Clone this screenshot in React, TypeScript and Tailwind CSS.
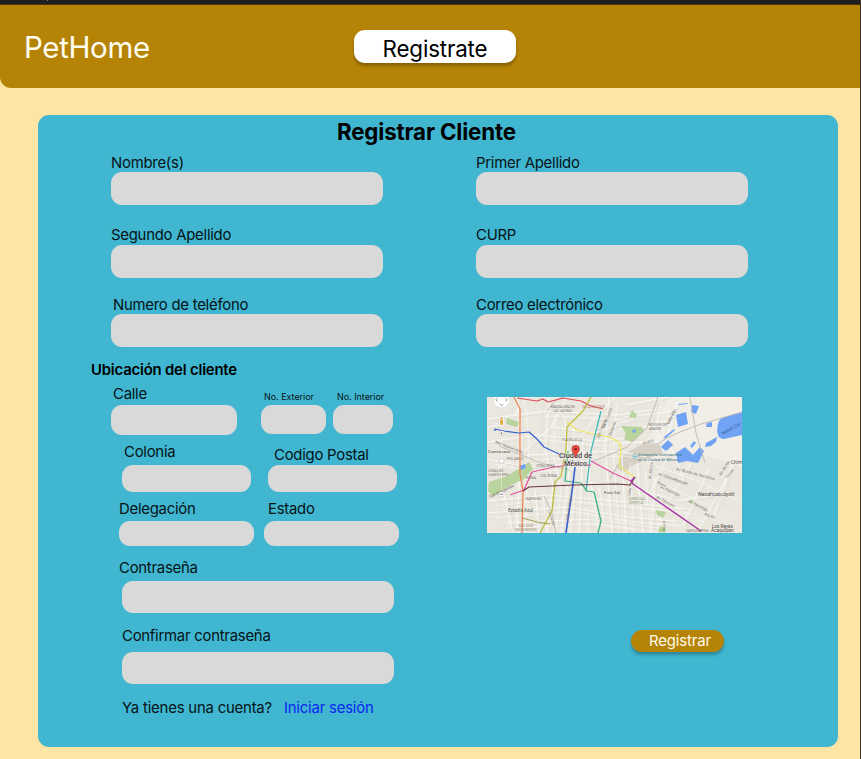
type FieldProps = {
  label: string;
  className?: string;
  labelClass?: string;
  boxClass: string;
};

function Field({ label, className = "", labelClass = "", boxClass }: FieldProps) {
  return (
    <label className={`flex flex-col items-start ${className}`}>
      <span className={`whitespace-nowrap ${labelClass}`}>{label}</span>
      <input className={`bg-[#d9d9d9] outline-none ${boxClass}`} />
    </label>
  );
}

const WIDE = "h-[33px] w-[272px] rounded-[11px]";

const STREETS = [
  "M0 22L60 14L130 18L170 12", "M0 45L50 38L110 44L150 40", "M0 62L40 70L95 66", "M40 58L130 54L160 60",
  "M30 0L34 40L30 136", "M62 0L58 50L66 90L60 136", "M78 20L82 80L74 136", "M96 40L92 136", "M122 0L118 50L125 136",
  "M135 60L139 136", "M150 66L156 136", "M0 104L60 98L130 104L200 112", "M0 116L80 110L140 120L190 124",
  "M20 126L100 122L180 132", "M16 92L26 136", "M48 92L52 136", "M104 85L112 136", "M168 80L164 136",
  "M176 0L168 30L180 52", "M190 4L180 40L196 80", "M138 8L180 0", "M136 20L186 14", "M132 32L180 28",
  "M126 46L184 44", "M160 66L210 84L255 106", "M166 82L220 108L250 136", "M158 95L216 126", "M180 60L164 94",
  "M204 66L178 110", "M222 72L196 128", "M241 78L212 132", "M248 60L226 120", "M150 92L190 104L238 96",
  "M0 78L30 60L64 30L80 0", "M64 30L108 36L150 20", "M88 48L110 18L128 0", "M0 30L22 26L40 0",
];

function Label({ x, y, s = 4, r = 0, c = "#77736c", children }: { x: number; y: number; s?: number; r?: number; c?: string; children: string }) {
  return (
    <text x={x} y={y} fontSize={s} fill={c} transform={`rotate(${r} ${x} ${y})`}>
      {children}
    </text>
  );
}

function CityMap() {
  return (
    <svg viewBox="0 0 255 136" preserveAspectRatio="none" className="mt-[50px] ml-[11px] h-[136px] w-[255px] tracking-normal" fontFamily="Roboto, sans-serif">
      <rect width="255" height="136" fill="#eae7df" />
      <path d="M180 0H255V70L238 64L196 52L172 62L150 60L164 36Z" fill="#f1eee8" />
      <path d="M130 70L136 58L150 50L160 45L173 48L176 56L160 62L146 68L136 76Z" fill="#d6cfc5" />
      <g fill="none" stroke="#faf9f6" strokeWidth="1">
        {STREETS.map((d) => <path key={d} d={d} />)}
        {STREETS.slice(0, 18).map((d) => <path key={d} d={d} transform="translate(8 5)" strokeWidth=".7" />)}
      </g>
      <g fill="none" stroke="#dcd8cf" strokeWidth=".4">
        {STREETS.map((d) => <path key={d} d={d} transform="translate(3 2)" />)}
        {STREETS.slice(0, 26).map((d) => <path key={d} d={d} transform="translate(-5 7)" />)}
      </g>
      {/* parks */}
      <g fill="#b8d39b">
        <path d="M2 85L20 79L36 69L42 65L46 72L37 82L22 89L6 99L1 94Z" />
        <path d="M20 21L32 25L30 30L19 27Z" />
        <path d="M134 29L155 30L157 34L145 45L137 42L139 36Z" />
        <path d="M145 13L150 18L149 21L142 20Z" />
        <path d="M169 113L179 115L176 121L170 118Z" />
        <path d="M173 129L179 131L178 136L171 135Z" />
        <path d="M203 103L207 104L204 107Z" />
      </g>
      {/* lakes */}
      <g fill="#71a3f5">
        <path d="M189 18L199 15L201 27L191 30Z" />
        <path d="M205 8L212 9L209 17L204 15Z" />
        <path d="M220 26L225 25L225 30L219 30Z" />
        <path d="M219 46L230 40L229 45L224 49L218 50Z" />
        <path d="M231 27Q232 21 238 20L255 15V38L237 42Q228 42 231 27Z" />
        <path d="M189 56L198 50L206 58L213 50L217 54L211 66L200 64L191 66Z" />
        <path d="M174 50L181 43L186 48L179 54Z" />
        <path d="M191 7L201 6L200 7L192 8Z" />
        <path d="M177 40L187 32L188 33L178 42Z" />
        <path d="M203 49L207 44L209 46L205 51Z" />
        <path d="M146 33L149 32L148 36L145 35Z" />
        <path d="M32 69L38 67L39 71L34 73Z" />
      </g>
      {/* main roads */}
      <g fill="none" stroke="#bdb9b0" strokeWidth=".9">
        <path d="M170 47L188 37L214 27L255 15" />
        <path d="M203 0L209 36L218 66" />
        <path d="M104 65L124 57L140 50L160 31L171 0" />
        <path d="M60 14L68 4L76 0" />
        <path d="M12 49L54 66L82 73" />
        <path d="M57 99L65 116L69 136" />
        <path d="M123 82L134 62" />
      </g>
      {/* metro lines */}
      <g fill="none" strokeWidth="1.25" strokeLinejoin="round">
        <path d="M27 0L33 12L33 77L36 94L35 136" stroke="#ee8350" />
        <path d="M30 1L50 4L56 2L61 5L76 1L94 4L104 9L116 12" stroke="#df4d59" />
        <path d="M104 0L96 14L80 30L79 52L74 79L68 85L65 114L53 136" stroke="#bcbd38" />
        <path d="M80 25L90 33L107 37L122 40L132 45L134 52L132 69L147 80" stroke="#efe65f" />
        <path d="M114 14L104 54L99 94" stroke="#3dbbb6" />
        <path d="M81 54L78 84L94 86L100 94L107 95L114 124L111 136" stroke="#3baf80" />
        <path d="M8 34V32L17 34L32 36L42 35L50 42L57 50L74 58" stroke="#355fd0" />
        <path d="M88 70L86 87L79 136" stroke="#355fd0" strokeWidth="1.6" />
        <path d="M23 98L37 93L45 75L67 70L83 68H104" stroke="#e2539d" />
        <path d="M104 64L126 76L144 84" stroke="#e2539d" />
        <path d="M36 94L42 90L87 88L130 87L143 88L148 80" stroke="#67343d" />
        <path d="M148 80L144 84L146 87L214 134" stroke="#a638a5" strokeWidth="1.5" />
        <path d="M35 121L50 125L63 127" stroke="#9a9343" strokeWidth=".9" />
      </g>
      <Label x={64} y={11} s={3.2}>MAGDALENA DE</Label>
      <Label x={66} y={15} s={3.2}>LAS SALINAS</Label>
      <Label x={95} y={11} s={3.1} c="#b47a68">VILLA GUSTAVO</Label>
      <Label x={75} y={44} s={3.4}>TLATELOLCO</Label>
      <Label x={20} y={63} s={3.6}>POLANCO</Label>
      <Label x={1} y={56} s={4.2} c="#4e4c48">Cuernavaca</Label>
      <Label x={8} y={46} r={21} s={3.8}>Blvd Manuel Avila</Label>
      <Label x={1} y={75} s={3.2}>LOMAS DE</Label>
      <Label x={1} y={79} s={3.2}>CHAPULTEPEC</Label>
      <Label x={39} y={82} s={3.5}>ROMA</Label>
      <Label x={53} y={80} s={3.5}>COL ROMA</Label>
      <Label x={49} y={70} s={3.5}>ZONA ROSA</Label>
      <Label x={3} y={101} r={-25} s={4} c="#55524d">Constituyentes</Label>
      <Label x={39} y={103} s={3.5}>NAPOLES</Label>
      <Label x={21} y={115} s={4.5} c="#4e4c48">Estadio Azul</Label>
      <Label x={31} y={130} s={3.3} c="#a9917f">SAN JOSE</Label>
      <Label x={28} y={134} s={3.3} c="#a9917f">INSURGENTES</Label>
      <Label x={81} y={124} r={-80} s={3.8}>Calz. de Tlalpan</Label>
      <Label x={61} y={114} r={72} s={3}>Universidad</Label>
      <Label x={112} y={41} r={-66} s={4}>Eje 1 Norte</Label>
      <Label x={118} y={31} r={-70} s={4}>Av. Eduardo</Label>
      <Label x={124} y={39} r={-70} s={4}>Oceania</Label>
      <Label x={117} y={97} s={4.4} c="#4e4c48">Foro Sol</Label>
      <Label x={182} y={28} r={-64} s={4} c="#555">Valle Alto</Label>
      <Label x={162} y={29} s={3}>BOSQUES DE</Label>
      <Label x={162} y={33} s={3}>ARAGON</Label>
      <Label x={156} y={47} r={-12} s={3.6}>Av 602</Label>
      <Label x={151} y={59} s={4} c="#35727e">Aeropuerto Internacional</Label>
      <Label x={151} y={63.5} s={4} c="#35727e">de la Ciudad de México</Label>
      <Label x={236} y={38} r={-30} s={4.6} c="#375a99">Nabor Car</Label>
      <Label x={244} y={67} s={4.8} c="#54514d">Chim</Label>
      <Label x={189} y={73} r={15} s={4}>Av. Bordo de Xochiaca</Label>
      <Label x={171} y={78} r={19} s={4}>Av Chimalhuacán</Label>
      <Label x={173} y={91} r={25} s={4}>Av Pantitlán</Label>
      <Label x={170} y={86} r={25} s={3.6}>Reyes</Label>
      <Label x={169} y={101} r={28} s={4}>Av Texcoco</Label>
      <Label x={201} y={105} r={27} s={4}>Av Pantitlán</Label>
      <Label x={217} y={118} r={20} s={4}>4ta Av</Label>
      <Label x={164} y={82} r={-82} s={3.8}>Av. Río Ch.</Label>
      <Label x={143} y={99} r={-78} s={3.6}>Calle 7</Label>
      <Label x={178} y={134} r={-86} s={3.6}>Riva P.</Label>
      <Label x={142} y={103} s={3.3} c="#8a9a72">AGRÍCOLA</Label>
      <Label x={142} y={107} s={3.3} c="#8a9a72">ORIENTAL</Label>
      <Label x={199} y={134.5} s={3}>SANTA MARTHA</Label>
      <Label x={234} y={79} r={-58} s={4}>Av. de las</Label>
      <Label x={240} y={82} r={-52} s={4}>Torres</Label>
      <Label x={211} y={99} s={5.3} c="#504c48">Nezahualcóyotl</Label>
      <Label x={225} y={130.5} s={4.6} c="#504c48">Los Reyes</Label>
      <Label x={224} y={135} s={4.6} c="#504c48">Acaquilpan</Label>
      <g fill="#454143" fontSize="6.7" fontWeight="500" stroke="#f0ede7" strokeWidth=".8" paintOrder="stroke">
        <text x="72" y="61.3" textLength="33" lengthAdjust="spacingAndGlyphs">Ciudad de</text>
        <text x="77" y="69.3" textLength="23" lengthAdjust="spacingAndGlyphs">México</text>
      </g>
      <circle cx="148" cy="59.5" r="2.3" fill="#fff" stroke="#4cabb2" strokeWidth=".7" />
      <path d="M146.8 59.5H149.2M148 58.3V60.7" stroke="#38949e" strokeWidth=".7" />
      {/* place marker */}
      <path d="M88.5 61C88 56 84.8 55.5 84.8 52A3.8 3.8 0 0 1 92.4 52C92.4 55.5 89.2 56 88.5 61Z" fill="#ed4742" stroke="#ae302e" strokeWidth=".5" />
      <circle cx="88.6" cy="52" r="1.2" fill="#792220" />
      {/* map controls */}
      <circle cx="14.5" cy="3" r="8" fill="#fff" stroke="#d0cec9" strokeWidth=".5" />
      <path d="M10.5 1L8.8 2.8L10.5 4.5M18.5 1L20.2 2.8L18.5 4.5M12.7 7L14.5 8.8L16.3 7" fill="none" stroke="#888" strokeWidth=".9" />
      <rect x="12" y="19" width="5" height="11" rx=".8" fill="#fff" stroke="#ccc" strokeWidth=".5" />
      <circle cx="14.5" cy="21.4" r="1.2" fill="#d79835" />
      <path d="M13 23H16V26L15.2 28.5H13.8L13 26Z" fill="#e7ac3f" />
      <rect x="12.2" y="34" width="4.6" height="4.6" rx=".7" fill="#fff" stroke="#bbb" strokeWidth=".5" />
      <path d="M13.2 36.3H15.8M14.5 35V37.6" stroke="#777" strokeWidth=".7" />
      <path d="M14.5 39V94" stroke="#fff" strokeWidth=".7" opacity=".5" />
      <rect x="12.2" y="62" width="4.6" height="4" rx=".7" fill="#fff" stroke="#bbb" strokeWidth=".5" />
      <rect x="12.2" y="95" width="4.6" height="4.6" rx=".7" fill="#fff" stroke="#bbb" strokeWidth=".5" />
      <path d="M13.2 97.3H15.8" stroke="#666" strokeWidth=".8" />
    </svg>
  );
}

export default function App() {
  return (
    <div className="flex h-[759px] w-[861px] flex-col overflow-hidden border-r border-[#3b3528] bg-[#ffe5a5] font-['Inter',sans-serif] text-[14.9px] leading-[18px] tracking-[-0.25px] text-[#061316]">
      <div className="h-[5px] shrink-0 border-b border-[#4a3510] bg-[#201e20]">
        <div className="ml-[47px] h-px w-px bg-[#777]" />
      </div>
      <header className="flex h-[83px] shrink-0 items-start rounded-bl-[11px] bg-[#b58407]">
        <h1 className="mt-[24px] ml-[24px] w-[330px] text-[29.5px] leading-[36px] tracking-[-0.35px] text-[#fffdf0]">PetHome</h1>
        <button className="mt-[25px] h-[33px] w-[162px] rounded-[11px] bg-white pt-[3px] text-[22.35px] leading-[27px] tracking-[-0.15px] text-black shadow-[0_3px_3px_rgba(0,0,0,0.25)]">
          Registrate
        </button>
      </header>
      <main className="mt-[27px] ml-[38px] flex h-[632px] w-[800px] shrink-0 flex-col rounded-[11px] bg-[#40b6d1]">
        <h2 className="mt-[3px] ml-[299px] text-[22.35px] leading-[27px] font-bold tracking-[-0.18px] whitespace-nowrap text-black">Registrar Cliente</h2>
        <div className="mt-[9px] flex">
          <form className="ml-[53px] flex w-[385px] flex-col">
            <Field label="Nombre(s)" className="ml-[20px]" boxClass={WIDE} />
            <Field label="Segundo Apellido" className="mt-[21px] ml-[20px]" boxClass={`mt-px ${WIDE}`} />
            <Field label="Numero de teléfono" className="mt-[18px] ml-[20px]" labelClass="ml-[2px]" boxClass={WIDE} />
            <h3 className="mt-[14px] font-semibold tracking-[-0.2px] text-black">Ubicación del cliente</h3>
            <div className="mt-[6px] ml-[20px] flex items-end">
              <Field label="Calle" labelClass="ml-[2px]" boxClass="mt-[2px] h-[30px] w-[126px] rounded-[11px]" />
              <Field label="No. Exterior" className="ml-[24px]" labelClass="ml-[3px] text-[8.94px] leading-[11px] tracking-normal" boxClass="mt-[3px] h-[29px] w-[65px] mb-px rounded-[11px]" />
              <Field label="No. Interior" className="ml-[7px]" labelClass="ml-[4px] text-[8.94px] leading-[11px] tracking-normal" boxClass="mt-[3px] h-[29px] w-[60px] mb-px rounded-[11px]" />
            </div>
            <div className="mt-[8px] ml-[31px] flex items-end">
              <Field label="Colonia" labelClass="ml-[2px]" boxClass="mt-[4px] h-[27px] w-[129px] rounded-[11px]" />
              <Field label="Codigo Postal" className="ml-[17px]" labelClass="ml-[6px]" boxClass="mt-px h-[27px] w-[129px] rounded-[11px]" />
            </div>
            <div className="mt-[8px] ml-[28px] flex">
              <Field label="Delegación" boxClass="mt-[3px] h-[25px] w-[135px] rounded-[11px]" />
              <Field label="Estado" className="ml-[10px]" labelClass="ml-[4px]" boxClass="mt-[3px] h-[25px] w-[135px] rounded-[11px]" />
            </div>
            <Field label="Contraseña" className="mt-[13px] ml-[28px]" boxClass="mt-[4px] ml-[3px] h-[32px] w-[272px] rounded-[11px]" />
            <Field label="Confirmar contraseña" className="mt-[14px] ml-[31px]" boxClass="mt-[7px] h-[32px] w-[272px] rounded-[11px]" />
            <p className="mt-[15px] ml-[31px] flex gap-[12px] tracking-[-0.2px] whitespace-nowrap">
              Ya tienes una cuenta?
              <a className="tracking-[-0.2px] text-[#0b27ef]">Iniciar sesión</a>
            </p>
          </form>
          <section className="flex w-[272px] flex-col">
            <Field label="Primer Apellido" boxClass={WIDE} />
            <Field label="CURP" className="mt-[21px]" boxClass={`mt-px ${WIDE}`} />
            <Field label="Correo electrónico" className="mt-[18px]" boxClass={WIDE} />
            <CityMap />
            <button className="mt-[97px] ml-[155px] h-[22px] w-[93px] rounded-[11px] bg-[#b58407] pl-[5px] leading-[22px] tracking-[-0.1px] text-[#fffbea] shadow-[0_3px_3px_rgba(0,0,0,0.25)]">
              Registrar
            </button>
          </section>
        </div>
      </main>
    </div>
  );
}
